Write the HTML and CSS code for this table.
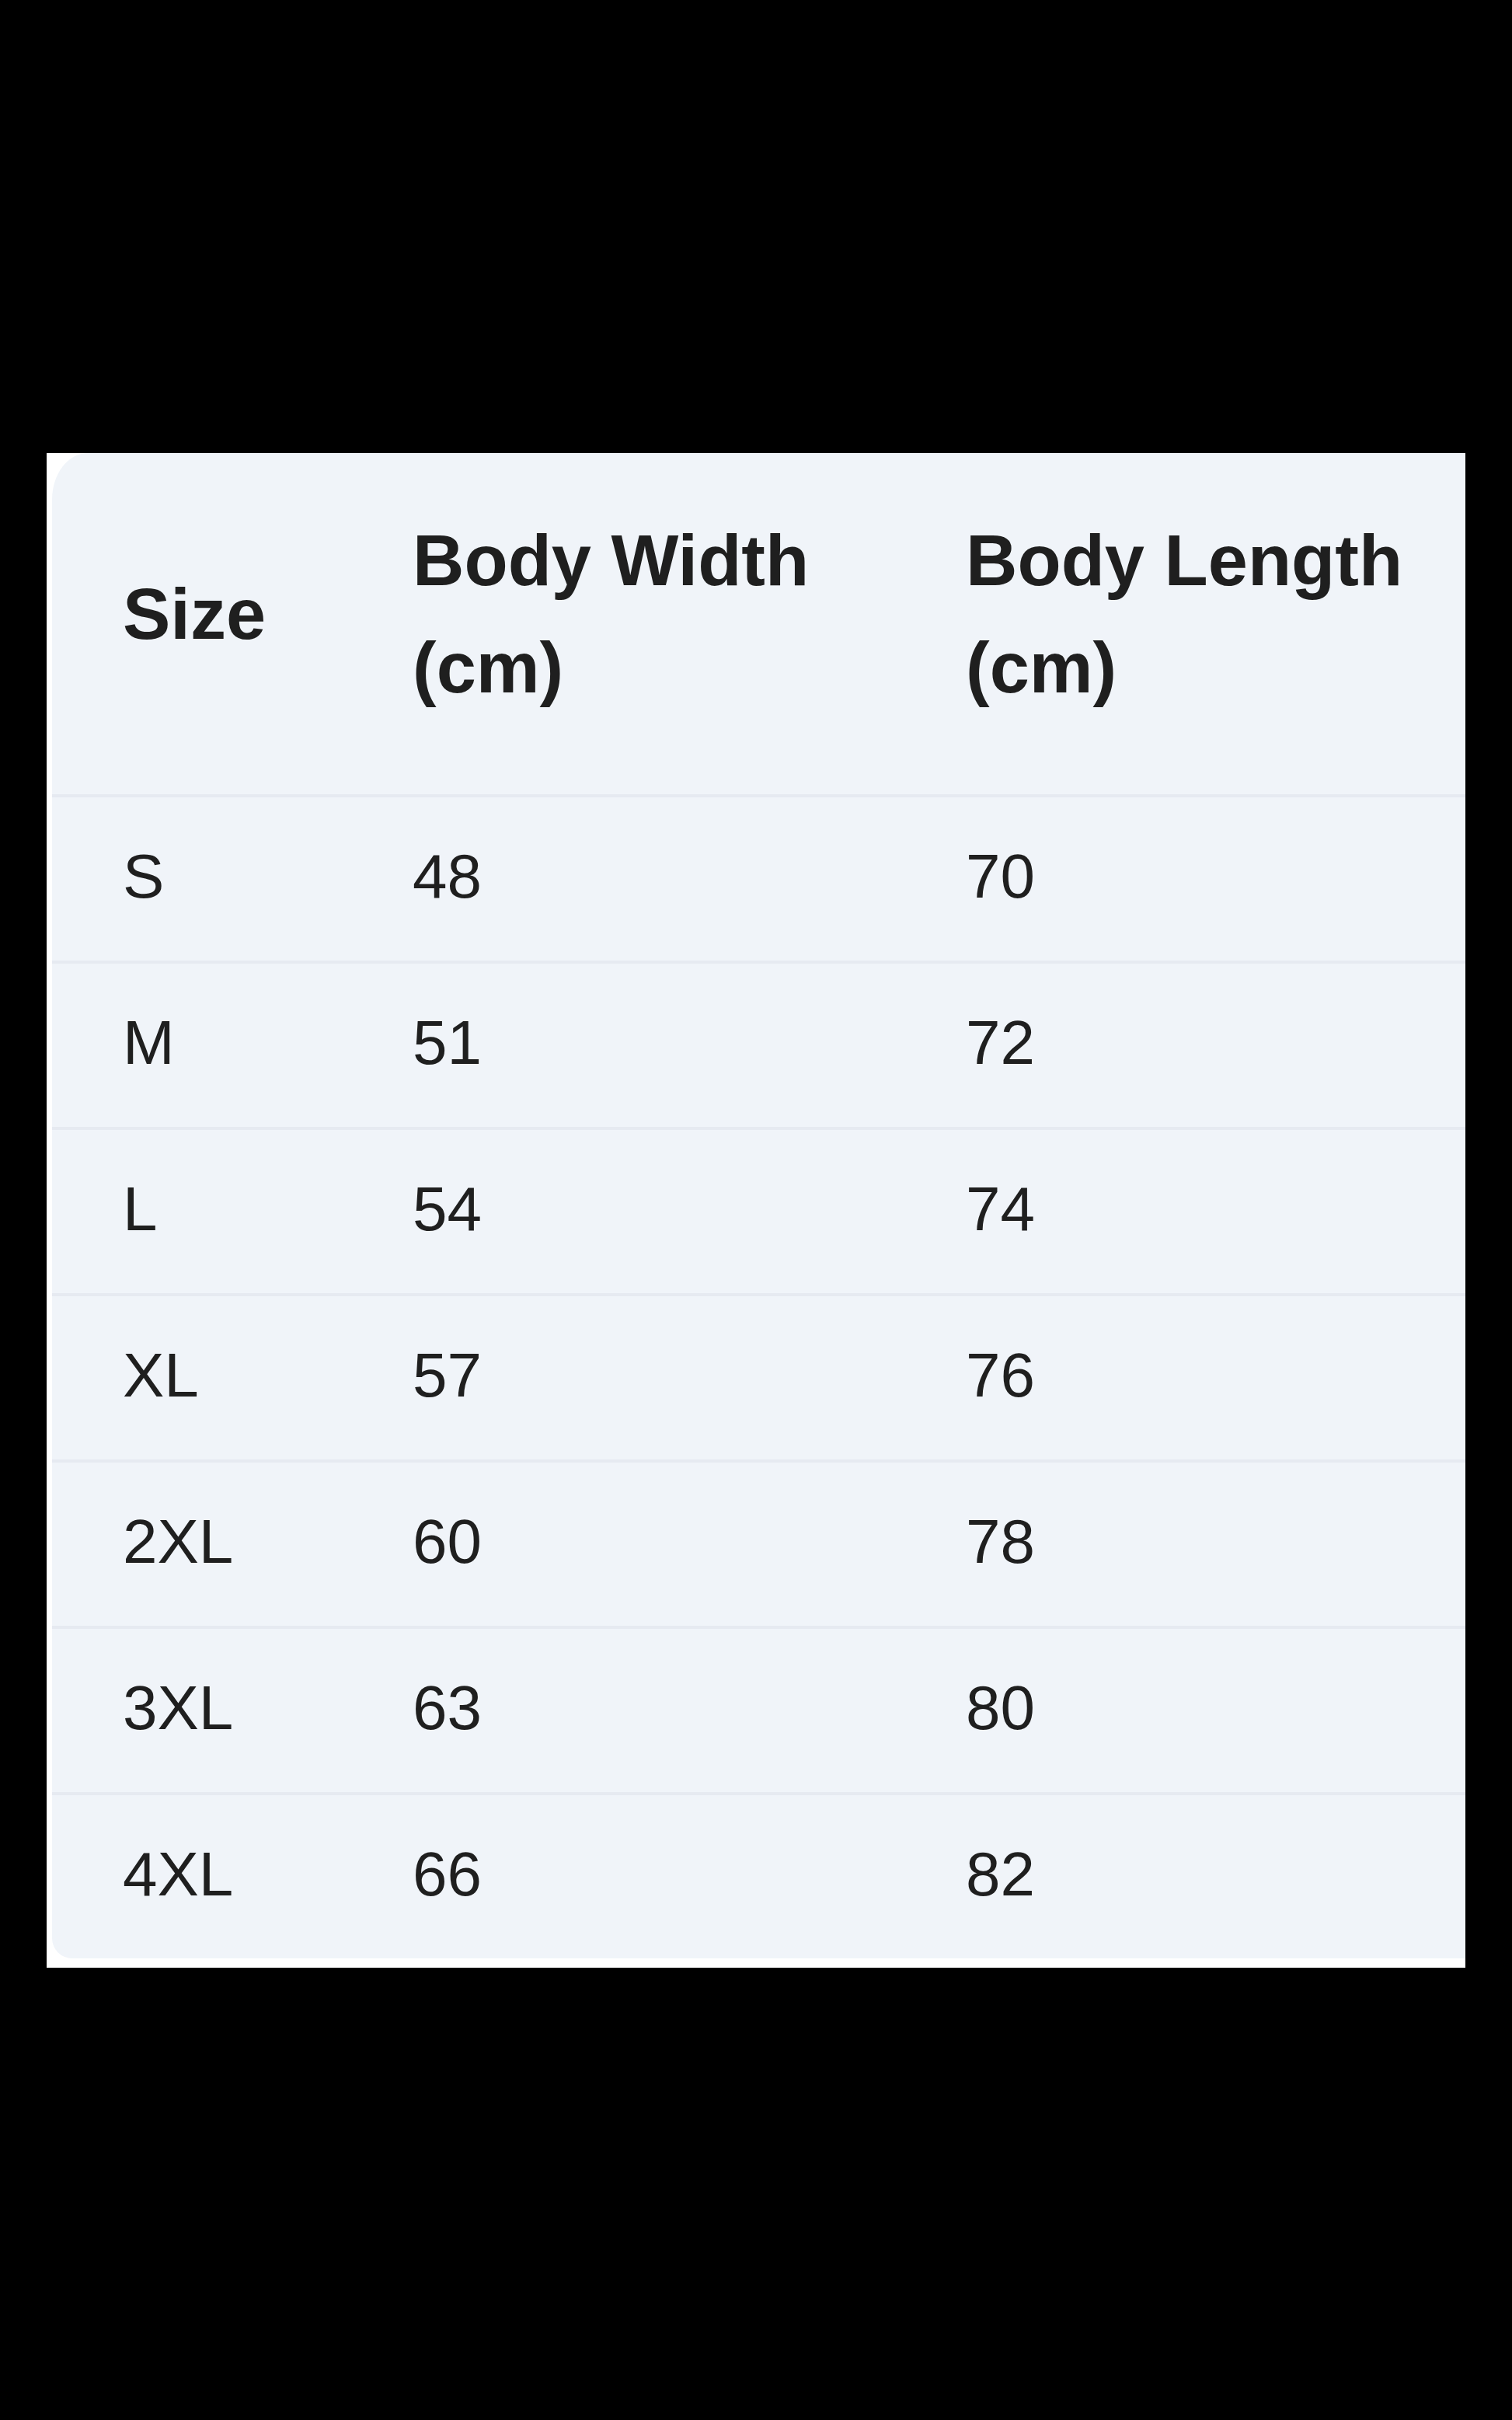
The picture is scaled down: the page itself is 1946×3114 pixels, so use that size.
FILE: index.html
```html
<!DOCTYPE html>
<html lang="en">
<head>
<meta charset="utf-8">
<title>Size chart</title>
<link rel="stylesheet" href="styles.css">
</head>
<body>
<div class="frame">
  <div class="card">
    <div class="row head">
      <div class="cell">Size</div>
      <div class="cell">Body Width<br>(cm)</div>
      <div class="cell">Body Length<br>(cm)</div>
    </div>
    <div class="row"><div class="cell">S</div><div class="cell">48</div><div class="cell">70</div></div>
    <div class="row"><div class="cell">M</div><div class="cell">51</div><div class="cell">72</div></div>
    <div class="row"><div class="cell">L</div><div class="cell">54</div><div class="cell">74</div></div>
    <div class="row"><div class="cell">XL</div><div class="cell">57</div><div class="cell">76</div></div>
    <div class="row"><div class="cell">2XL</div><div class="cell">60</div><div class="cell">78</div></div>
    <div class="row"><div class="cell">3XL</div><div class="cell">63</div><div class="cell">80</div></div>
    <div class="row"><div class="cell">4XL</div><div class="cell">66</div><div class="cell">82</div></div>
  </div>
</div>
</body>
</html>
```

FILE: styles.css
```css
html, body {
  margin: 0;
  padding: 0;
  background: #000;
}

body {
  width: 1946px;
  height: 3114px;
  overflow: hidden;
  font-family: "Liberation Sans", Arial, sans-serif;
  color: #1f1f1f;
}

.frame {
  margin: 583px 0 0 60px;
  width: 1826px;
  height: 1949px;
  background: #ffffff;
  padding: 0 0 0 7px;
  box-sizing: border-box;
}

.card {
  background: #f0f4f9;
  border-top-left-radius: 46px 60px;
  border-bottom-left-radius: 26px;
  display: flex;
  flex-direction: column;
}

.row {
  display: grid;
  grid-template-columns: 373px 712px 1fr;
  padding-left: 91px;
  height: 214px;
  align-items: center;
  box-sizing: border-box;
  padding-bottom: 6px;
  border-top: 4px solid #e6eaf1;
  font-size: 80px;
  line-height: 1;
}

.row.head {
  border-top: 0;
  height: 439px;
  padding-bottom: 25px;
  font-size: 92px;
  font-weight: 700;
  line-height: 138px;
}
```
